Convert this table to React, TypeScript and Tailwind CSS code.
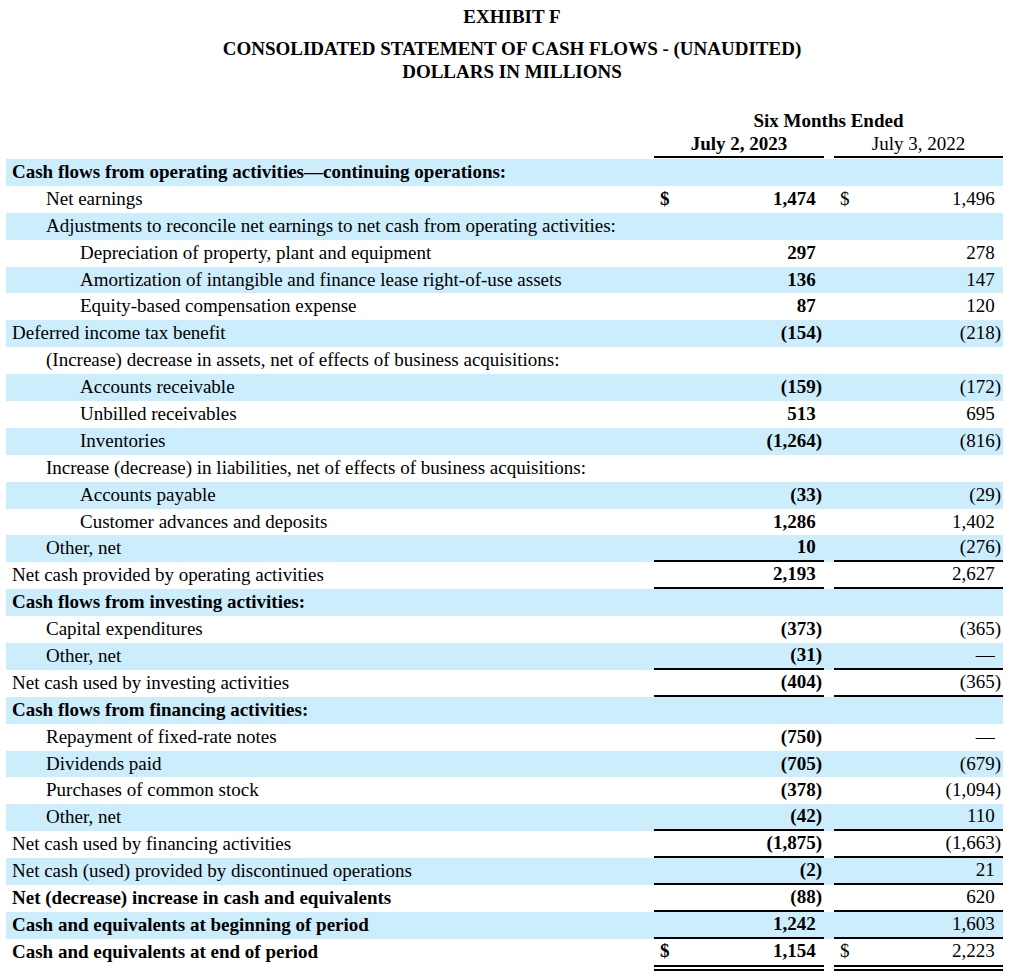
type Row = {
  label: string;
  level?: number;
  bold?: boolean;
  a?: string;
  b?: string;
  dollar?: boolean;
  line?: boolean;
  double?: boolean;
};

const rows: Row[] = [
  { label: "Cash flows from operating activities\u2014continuing operations:", bold: true },
  { label: "Net earnings", level: 1, a: "1,474", b: "1,496", dollar: true },
  { label: "Adjustments to reconcile net earnings to net cash from operating activities:", level: 1 },
  { label: "Depreciation of property, plant and equipment", level: 2, a: "297", b: "278" },
  { label: "Amortization of intangible and finance lease right-of-use assets", level: 2, a: "136", b: "147" },
  { label: "Equity-based compensation expense", level: 2, a: "87", b: "120" },
  { label: "Deferred income tax benefit", a: "(154)", b: "(218)" },
  { label: "(Increase) decrease in assets, net of effects of business acquisitions:", level: 1 },
  { label: "Accounts receivable", level: 2, a: "(159)", b: "(172)" },
  { label: "Unbilled receivables", level: 2, a: "513", b: "695" },
  { label: "Inventories", level: 2, a: "(1,264)", b: "(816)" },
  { label: "Increase (decrease) in liabilities, net of effects of business acquisitions:", level: 1 },
  { label: "Accounts payable", level: 2, a: "(33)", b: "(29)" },
  { label: "Customer advances and deposits", level: 2, a: "1,286", b: "1,402" },
  { label: "Other, net", level: 1, a: "10", b: "(276)", line: true },
  { label: "Net cash provided by operating activities", a: "2,193", b: "2,627", line: true },
  { label: "Cash flows from investing activities:", bold: true },
  { label: "Capital expenditures", level: 1, a: "(373)", b: "(365)" },
  { label: "Other, net", level: 1, a: "(31)", b: "\u2014", line: true },
  { label: "Net cash used by investing activities", a: "(404)", b: "(365)", line: true },
  { label: "Cash flows from financing activities:", bold: true },
  { label: "Repayment of fixed-rate notes", level: 1, a: "(750)", b: "\u2014" },
  { label: "Dividends paid", level: 1, a: "(705)", b: "(679)" },
  { label: "Purchases of common stock", level: 1, a: "(378)", b: "(1,094)" },
  { label: "Other, net", level: 1, a: "(42)", b: "110", line: true },
  { label: "Net cash used by financing activities", a: "(1,875)", b: "(1,663)", line: true },
  { label: "Net cash (used) provided by discontinued operations", a: "(2)", b: "21", line: true },
  { label: "Net (decrease) increase in cash and equivalents", bold: true, a: "(88)", b: "620", line: true },
  { label: "Cash and equivalents at beginning of period", bold: true, a: "1,242", b: "1,603", line: true },
  { label: "Cash and equivalents at end of period", bold: true, a: "1,154", b: "2,223", dollar: true, double: true },
];

function Amount({ v }: { v?: string }) {
  if (!v) return null;
  const neg = v.endsWith(")");
  return (
    <span>
      {v}
      {!neg && <span className="invisible">)</span>}
    </span>
  );
}

function Cell({ v, dollar, bold, line, double, w }: { v?: string; dollar?: boolean; bold?: boolean; line?: boolean; double?: boolean; w: string }) {
  const border = double
    ? "h-[31.9px] border-b-[6px] border-double border-black"
    : line
    ? "h-[26.9px] border-b-2 border-black"
    : "h-[26.9px]";
  return (
    <div className={`${w} shrink-0 flex items-center justify-between pl-[6px] pr-[2px] ${bold ? "font-bold" : ""} ${border}`}>
      <span>{dollar ? "$" : ""}</span>
      <Amount v={v} />
    </div>
  );
}

export default function App() {
  return (
    <div className="w-[1024px] bg-white text-black text-[19px]" style={{ fontFamily: '"Liberation Serif", "Times New Roman", serif' }}>
      <div className="pt-[5px] text-center font-bold leading-[23px]">
        <div>EXHIBIT F</div>
        <div className="mt-[9px]">CONSOLIDATED STATEMENT OF CASH FLOWS - (UNAUDITED)</div>
        <div>DOLLARS IN MILLIONS</div>
      </div>

      <div className="mt-[26px] flex pl-[654px] pr-[21px] leading-[23px]">
        <div className="flex-1 text-center font-bold">Six Months Ended</div>
      </div>
      <div className="flex pl-[654px] pr-[21px] gap-[10px] leading-[23px]">
        <div className="w-[170px] text-center font-bold border-b-2 border-black pb-[1px]">July 2, 2023</div>
        <div className="w-[169px] text-center border-b-2 border-black pb-[1px]">July 3, 2022</div>
      </div>

      <div className="pl-[6px] pr-[21px] pt-[1px]">
        {rows.map((r, i) => (
          <div key={i} className={`flex items-start leading-[26.9px] ${i % 2 === 0 ? "bg-[#ccedfc]" : ""}`}>
            <div
              className={`flex-1 h-[26.9px] whitespace-nowrap ${r.bold ? "font-bold" : ""} ${
                r.level === 2 ? "pl-[74px]" : r.level === 1 ? "pl-[40px]" : "pl-[6px]"
              }`}
            >
              {r.label}
            </div>
            <Cell w="w-[170px]" v={r.a} dollar={r.dollar} bold line={r.line} double={r.double} />
            <div className="w-[10px] shrink-0" />
            <Cell w="w-[169px]" v={r.b} dollar={r.dollar} line={r.line} double={r.double} />
          </div>
        ))}
      </div>
    </div>
  );
}
